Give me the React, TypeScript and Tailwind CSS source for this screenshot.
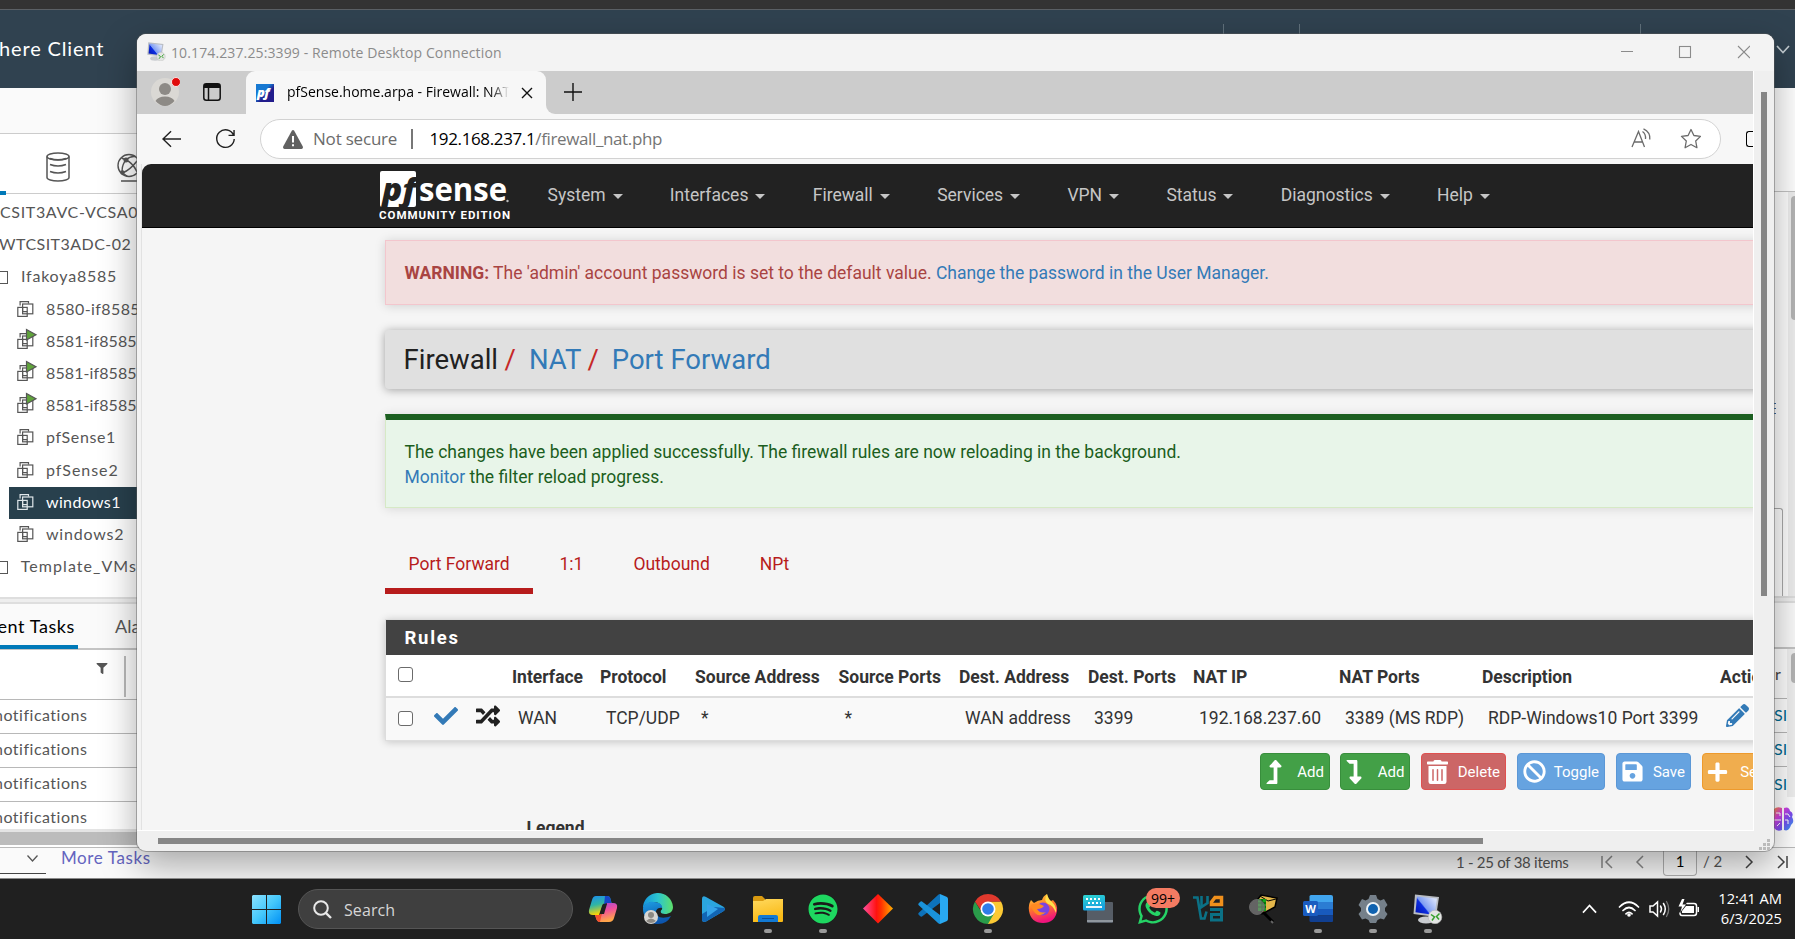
import type { ReactNode } from "react";
import {
  FaBan,
  FaCheck,
  FaFilter,
  FaLevelDownAlt,
  FaLevelUpAlt,
  FaPencilAlt,
  FaPlus,
  FaRandom,
  FaSave,
  FaSpotify,
  FaTrashAlt,
  FaWhatsapp,
} from "react-icons/fa";

/* ---------- vSphere client behind the remote session ---------- */

function VmIcon({ light, running }: { light?: boolean; running?: boolean }) {
  return (
    <svg viewBox="0 0 19 19" className="-mt-[3px] h-[19px] w-[19px] shrink-0 overflow-visible" fill="none" stroke={light ? "#dfe6ea" : "#565656"} strokeWidth="1.2">
      <path d="M3.1 6.5V2.6H11.5V4.4" />
      <rect x="5.6" y="5" width="10.2" height="9.8" />
      <rect x=".8" y="8.4" width="9.4" height="9" />
      <path d="M5.6 8.4V12.6H10.2" />
      {running && <path d="M9.500 -1.500V9L19 3.700Z" fill="#5fa43a" />}
    </svg>
  );
}

function TreeRow({ name, running, selected, spacing = "tracking-[0.35px]" }: { name: string; running?: boolean; selected?: boolean; spacing?: string }) {
  return (
    <div className={`ml-[9px] flex h-[32.2px] items-center pl-[8px] ${spacing} ${selected ? "bg-[#28404d] text-white" : ""}`}>
      <VmIcon light={selected} running={running} />
      <span className="-mt-[2px] ml-[10px] whitespace-nowrap">{name}</span>
    </div>
  );
}

function FolderRow({ name, spacing }: { name: string; spacing: string }) {
  return (
    <div className={`flex h-[32.2px] items-center ${spacing}`}>
      <span className="h-[13px] w-[8px] border border-l-0 border-[#565656]" />
      <span className="-mt-[2px] ml-[13px] whitespace-nowrap">{name}</span>
    </div>
  );
}

function LeftPane() {
  return (
    <div className="flex w-[137px] flex-col overflow-hidden font-[Lato,sans-serif] text-[#565656]">
      <div className="h-[45px] bg-[#fafafa]" />
      <div className="flex h-[61px] justify-between border-y border-[#cccccc] pl-[46px]">
        <svg viewBox="0 0 24 30" className="mt-[18px] h-[30px] w-[24px]" fill="none" stroke="#565656" strokeWidth="1.5">
          <ellipse cx="12" cy="4.5" rx="11" ry="3.5" />
          <path d="M1 4.5V25.5C1 27.500 6 29 12 29S23 27.500 23 25.500V4.500M4 12.500Q12 15.500 20 12.500M4 19.500Q12 22.500 20 19.500M4 6.5Q12 9 20 6.500" />
        </svg>
        <svg viewBox="0 0 20 30" className="mt-[19px] h-[30px] w-[20px]" fill="none" stroke="#565656" strokeWidth="1.400">
          <circle cx="12" cy="12.500" r="11" />
          <path d="M9 7Q16 10 20 19M9 7Q13 3 18 3.500M9 7L4.500 5M9 7Q4 13 5.500 20M5.500 20Q13 17 20 8M5.500 20L10 23M4 28H20" />
          <circle cx="9" cy="7" r="1.800" fill="#565656" />
          <circle cx="5.500" cy="19.500" r="1.500" fill="#565656" />
        </svg>
      </div>
      <div className="-mt-[3px] h-[4px] w-[6px] bg-[#0079b8]" />
      <div className="flex h-[402px] flex-col pt-[2px] text-[16px]">
        <div className="flex h-[32.2px] items-center pb-[2px] tracking-[0.65px] whitespace-nowrap">CSIT3AVC-VCSA0</div>
        <div className="-ml-px flex h-[32.2px] items-center pb-[2px] tracking-[0.450px] whitespace-nowrap">WTCSIT3ADC-02</div>
        <FolderRow name="Ifakoya8585" spacing="tracking-[0.8px]" />
        <TreeRow name="8580-if8585" spacing="tracking-[0.4px]" />
        <TreeRow name="8581-if8585-" spacing="tracking-[0.1px]" running />
        <TreeRow name="8581-if8585-" spacing="tracking-[0.1px]" running />
        <TreeRow name="8581-if8585-" spacing="tracking-[0.1px]" running />
        <TreeRow name="pfSense1" spacing="tracking-[0.6px]" />
        <TreeRow name="pfSense2" spacing="tracking-[0.95px]" />
        <TreeRow name="windows1" selected />
        <TreeRow name="windows2" spacing="tracking-[0.8px]" />
        <FolderRow name="Template_VMs" spacing="tracking-[1.050px]" />
      </div>
      <div className="h-[7px] border-y-2 border-[#dedede] bg-[#eeeeee]" />
      <div className="flex h-[46px] border-b-2 border-[#c4c4c4] bg-[#fafafa] text-[18px]">
        <div className="-mb-px flex w-[78px] items-center justify-end border-b-4 border-[#0079b8] pt-[4px] pr-[3px] tracking-[0.6px] whitespace-nowrap text-black">Recent Tasks</div>
        <div className="ml-[37px] flex items-center">Alarms</div>
      </div>
      <div className="flex h-[50px] border-b border-[#b8b8b8] bg-white pt-[6px]">
        <FaFilter className="mt-[7px] ml-[96px] h-[11px] w-[12px]" />
        <span className="ml-[16px] h-[41px] w-[2px] bg-[#bbbbbb]" />
      </div>
      {[0, 1, 2, 3].map((i) => (
        <div key={i} className={`flex w-[137px] items-center bg-white text-[16px] tracking-[0.5px] ${i < 3 ? "h-[34px] border-b border-[#b8b8b8] pb-[3px]" : "h-[27px] pt-[3px]"}`}>
          <span className="-ml-[6px]">notifications</span>
        </div>
      ))}
      <div className="h-[16px] border-t-3 border-[#e4e4e4] bg-[#bcbcbc]" />
    </div>
  );
}

function RightPane() {
  return (
    <div className="flex w-[21px] flex-col overflow-hidden bg-white font-[Lato,sans-serif]">
      <div className="h-[104px] border-b border-[#c4c4c4]" />
      <div className="flex h-[404px] justify-between">
        <div className="flex w-[9px] flex-col">
          <div className="mt-[211px] flex flex-col gap-[4px]">
            <span className="h-px w-[2px] bg-[#3566a0]" />
            <span className="h-px w-[2px] bg-[#3566a0]" />
            <span className="h-px w-[2px] bg-[#3566a0]" />
          </div>
          <div className="mt-[94px] grow rounded-tr-[3px] border-t border-r border-[#aaaaaa]" />
        </div>
        <div className="flex w-[7px] justify-end bg-[#eeeeee] pt-[4px]">
          <div className="h-[124px] w-[4px] rounded-l-[4px] bg-[#b5b5b5]" />
        </div>
      </div>
      <div className="h-[7px] border-y-2 border-[#dedede] bg-[#eeeeee]" />
      <div className="h-[46px] border-b-2 border-[#c4c4c4] bg-[#fafafa]" />
      <div className="flex h-[148px]">
        <div className="flex w-[13px] flex-col overflow-hidden text-[16px] text-[#006a91]">
          <div className="flex h-[50px] items-center border-b border-[#b8b8b8] pl-px text-[#444444]">r</div>
          <div className="flex h-[34px] items-center border-b border-[#b8b8b8] pb-[2px]">SI</div>
          <div className="flex h-[34px] items-center border-b border-[#b8b8b8] pb-[2px]">SI</div>
          <div className="flex h-[30px] items-center pt-[4px]">SI</div>
        </div>
        <div className="flex grow justify-end bg-[#f0f0f0] pt-[4px]">
          <div className="h-[30px] w-[4px] rounded-l-[4px] bg-[#b5b5b5]" />
        </div>
      </div>
      <div className="flex h-[47px] items-center bg-white">
        <svg viewBox="0 0 21 24" className="-mt-[3px] h-[24px] w-[21px]">
          <defs>
            <linearGradient id="brain" x1="0" y1="0" x2="1" y2="1">
              <stop offset="0" stopColor="#ff8a3c" />
              <stop offset=".3" stopColor="#d63fe0" />
              <stop offset=".6" stopColor="#7a4df0" />
              <stop offset="1" stopColor="#2ba8f5" />
            </linearGradient>
          </defs>
          <path d="M0 2Q3-1 8 1V23Q3 25 0 21ZM10 1Q15-1 16 4Q20 6 18 10Q21 15 17 18Q15 25 10 23Z" fill="url(#brain)" />
          <path d="M2 6H6V9M0 13H7M3 19L6 16M11 7H14L16 10M11 13H14V17" stroke="#fff" fill="none" />
        </svg>
      </div>
    </div>
  );
}

function VSphere() {
  return (
    <div className="flex h-[878px] flex-col">
      <div className="h-[10px] border-b border-[#5b6065] bg-[#333333]" />
      <div className="flex h-[78px] items-start bg-[#304250] font-[Lato,sans-serif] text-[20px] text-white">
        <div className="mt-[25px] -ml-[1px] w-[200px] leading-[26px] tracking-[0.850px]">here Client</div>
        <span className="mt-[14px] ml-[1024px] h-[20px] w-px bg-[#60707b]" />
        <span className="mt-[14px] ml-[75px] h-[20px] w-px bg-[#60707b]" />
        <span className="mt-[14px] ml-[340px] h-[20px] w-px bg-[#60707b]" />
        <svg viewBox="0 0 14 9" className="mt-[35px] ml-[135px] h-[9px] w-[14px]" fill="none" stroke="#c4ccd1" strokeWidth="1.6">
          <path d="M1 1L7 7.500L13 1" />
        </svg>
      </div>
      <div className="flex h-[759px] justify-between bg-white">
        <LeftPane />
        <RightPane />
      </div>
      <div className="flex h-[31px] items-start justify-between border-t border-[#bbbbbb] bg-[#fafafa] font-[Lato,sans-serif] text-[#565656]">
        <div className="flex">
          <div className="flex h-[26px] w-[46px] justify-end border-b border-[#444444]">
            <svg viewBox="0 0 11 7" className="mt-[7px] mr-[8px] h-[7px] w-[11px]" fill="none" stroke="#565656" strokeWidth="1.3">
              <path d="M.5 .5L5.500 6L10.500 .5" />
            </svg>
          </div>
          <span className="ml-[15px] text-[17px] leading-[19px] tracking-[0.600px] text-[#6464c0]">More Tasks</span>
        </div>
        <div className="flex h-[29px] items-center pb-[2px] text-[15px]">
          <span className="w-[145px] leading-[20px] tracking-[-0.270px]">1 - 25 of 38 items</span>
          <svg viewBox="0 0 44 14" className="h-[14px] w-[44px]" fill="none" stroke="#8a8a8a" strokeWidth="1.5">
            <path d="M1 1V13M11 1L5 7L11 13M42 1L36 7L42 13" />
          </svg>
          <span className="mr-[6px] ml-[18px] flex h-[29px] w-[34px] items-center justify-center rounded-b-[4px] border border-t-0 border-[#b0b0b0] text-black">1</span>
          <span className="w-[41px]">/ 2</span>
          <svg viewBox="0 0 44 14" className="mr-[7px] h-[14px] w-[44px]" fill="none" stroke="#444444" strokeWidth="1.5">
            <path d="M2 1L8 7L2 13M34 1L40 7L34 13M43 1V13" />
          </svg>
        </div>
      </div>
    </div>
  );
}

/* ---------- Remote desktop window ---------- */

function RdpIcon({ className, id }: { className: string; id: string }) {
  return (
    <svg viewBox="0 0 30 30" className={className}>
      <defs>
        <linearGradient id={id} x1="0" y1="1" x2="1" y2="0.300">
          <stop offset="0" stopColor="#0012b0" />
          <stop offset=".45" stopColor="#0d2ee0" />
          <stop offset=".5" stopColor="#7d9cf2" />
          <stop offset="1" stopColor="#d5e0fb" />
        </linearGradient>
      </defs>
      <ellipse cx="13" cy="26" rx="8" ry="3.500" fill="#c9ccd0" />
      <path d="M2 0.500L26 3L23 23L.5 20Z" fill="#b9bdc4" />
      <path d="M4 2.500L24 4.600L21.500 21L2.500 18.200Z" fill={`url(#${id})`} />
      <circle cx="22" cy="23" r="6.800" fill="#e3e5e3" stroke="#b5b5b5" strokeWidth=".6" />
      <path d="M18 20.500L21.500 23L19 26.500M26.500 19.500L23.500 22.500L26 25.500" fill="none" stroke="#35a02c" strokeWidth="1.500" />
    </svg>
  );
}

function TitleBar() {
  return (
    <div className="flex h-[37px] items-center bg-[#f3f3f3] pb-[2px] pl-[10px]">
      <RdpIcon id="rdpSmall" className="h-[19px] w-[19px]" />
      <span className="ml-[5px] pt-px text-[14px] tracking-[0.120px] text-[#8b8b8b]">10.174.237.25:3399 - Remote Desktop Connection</span>
      <svg viewBox="0 0 130 14" className="mr-[24px] ml-auto h-[14px] w-[130px]" fill="none" stroke="#8b8b8b" strokeWidth="1.100">
        <path d="M1 6.500H13M118 1L130 13M130 1L118 13" />
        <rect x="59.500" y="1.500" width="11" height="11" />
      </svg>
    </div>
  );
}

function TabStrip() {
  return (
    <div className="flex h-[43px] shrink-0 bg-[#cccccc]">
      <div className="flex w-[109px] items-center rounded-br-[8px]">
        <svg viewBox="0 0 30 30" className="mb-px ml-[13px] h-[30px] w-[30px]">
          <circle cx="15" cy="15" r="14" fill="#dad8d4" />
          <circle cx="15" cy="12" r="6" fill="#8d8a86" />
          <path d="M5.500 24Q8 19.500 15 19.500T24.500 24Q20 29 15 29T5.500 24Z" fill="#8d8a86" />
          <circle cx="26" cy="5" r="4.500" fill="#e00b0b" stroke="#fff" strokeWidth=".8" />
        </svg>
        <svg viewBox="0 0 18 18" className="-mt-px ml-[23px] h-[18px] w-[18px]" fill="none" stroke="#111" strokeWidth="1.500">
          <rect x=".8" y=".8" width="16.400" height="16.400" rx="2.500" />
          <path d="M1 1H17V5H1ZM5 5V17" fill="#111" stroke="none" />
          <path d="M5.500 5V17" />
        </svg>
      </div>
      <div className="flex h-[43px] bg-[#f7f7f7]">
        <div className="-ml-[10px] h-full w-[10px] self-end rounded-br-[9px] bg-[#cccccc]" />
      </div>
      <div className="flex h-[43px] w-[300px] items-center rounded-t-[9px] bg-[#f7f7f7] pb-[2px] pl-[10px]">
        <svg viewBox="0 0 18 18" className="mt-[2px] h-[18px] w-[18px]">
          <defs>
            <linearGradient id="favicon" x1="0" y1="0" x2="1" y2="1">
              <stop offset=".4" stopColor="#1779d2" />
              <stop offset=".6" stopColor="#221c8c" />
            </linearGradient>
          </defs>
          <rect width="18" height="18" fill="url(#favicon)" />
          <text x="1" y="13" fontFamily="Open Sans" fontWeight="800" fontStyle="italic" fontSize="13" letterSpacing="-.6" fill="#fff">pf</text>
        </svg>
        <span className="ml-[13px] w-[222px] overflow-hidden bg-linear-to-r from-black from-90% to-[#f7f7f7] bg-clip-text text-[14px] whitespace-nowrap text-transparent">
          pfSense.home.arpa - Firewall: NAT
        </span>
        <svg viewBox="0 0 12 12" className="mt-[2px] ml-[12px] h-[12px] w-[12px]" stroke="#111" strokeWidth="1.400">
          <path d="M1 1L11 11M11 1L1 11" />
        </svg>
      </div>
      <div className="flex items-center bg-[linear-gradient(#cccccc_50%,#f7f7f7_50%)]">
        <div className="flex h-full w-[60px] items-center rounded-bl-[9px] bg-[#cccccc] pb-[2px] pl-[18px]">
          <svg viewBox="0 0 18 18" className="h-[18px] w-[18px]" stroke="#111" strokeWidth="1.400">
            <path d="M0 9H18M9 0V18" />
          </svg>
        </div>
      </div>
    </div>
  );
}

function AddressBar() {
  return (
    <div className="flex h-[50px] shrink-0 items-center bg-[#f7f7f7]">
      <svg viewBox="0 0 20 18" className="ml-[25px] h-[18px] w-[20px]" fill="none" stroke="#222" strokeWidth="1.500">
        <path d="M20 9H1M9.500 .8L1 9L9.500 17.200" />
      </svg>
      <svg viewBox="0 0 22 22" className="ml-[34px] h-[22px] w-[22px]" fill="none" stroke="#222" strokeWidth="1.500">
        <path d="M19.500 7A9.200 9.200 0 1 0 20.200 11M20 1.500V7.200H14.200" />
      </svg>
      <div className="ml-[24px] flex h-[40px] w-[1461px] shrink-0 items-center rounded-full border border-[#d2d2d2] bg-white pl-[22px] text-[17px]">
        <svg viewBox="0 0 20 19" className="h-[19px] w-[20px]">
          <path d="M8.800 .8Q10-.6 11.200 .8L19.800 16.500Q20.300 18.800 18.500 19H1.500Q-.3 18.800 .2 16.500Z" fill="#616161" />
          <path d="M10 6V12.500M10 14.200V16.200" stroke="#fff" strokeWidth="2" />
        </svg>
        <span className="ml-[10px] w-[98px] tracking-[-0.200px] text-[#6b6b6b]">Not secure</span>
        <span className="h-[20px] w-[1.500px] bg-[#777777]" />
        <span className="ml-[17px] tracking-[-0.370px] text-[#757575]">
          <span className="text-black">192.168.237.1</span>/firewall_nat.php
        </span>
        <svg viewBox="0 0 70 22" className="mr-[19px] ml-auto h-[22px] w-[70px]" fill="none" stroke="#6b6b6b" strokeWidth="1.300">
          <path d="M1 19L7.500 3.500L13.500 19M3.200 14H11.600M11.500 3.500Q15 6 14.500 11M12.500 .8Q19.500 4 18.800 11.500" />
          <path d="M60 1.500L62.900 7.500L69.500 8.400L64.700 13L65.900 19.700L60 16.500L54.100 19.700L55.300 13L50.500 8.400L57.100 7.500Z" strokeLinejoin="round" />
        </svg>
      </div>
      <span className="ml-[25px] h-[16px] w-[7px] shrink-0 rounded-l-[3px] border-[1.500px] border-r-0 border-black" />
    </div>
  );
}

const menus = ["System", "Interfaces", "Firewall", "Services", "VPN", "Status", "Diagnostics", "Help"];

function NavBar() {
  return (
    <div className="flex h-[64px] shrink-0 rounded-tl-[9px] border-b border-black bg-[#222222] pl-[237px] font-[Roboto,sans-serif] text-[17.5px] text-[#c6c6c6]">
      <svg viewBox="0 0 134 56" className="mt-[6px] h-[56px] w-[134px] shrink-0">
        <rect x="1" y="1" width="36" height="36" rx="2" fill="#fff" />
        <text x="3" y="31" fontFamily="Open Sans" fontWeight="800" fontStyle="italic" fontSize="32" textLength="34" lengthAdjust="spacingAndGlyphs" fill="#222222">pf</text>
        <text x="40" y="31" fontFamily="Open Sans" fontWeight="700" fontSize="32" textLength="88" lengthAdjust="spacingAndGlyphs" fill="#fff">sense</text>
        <circle cx="128.500" cy="31" r="1.200" fill="#bbb" />
        <text x="0" y="49" fontFamily="Roboto" fontWeight="700" fontSize="11.500" textLength="131" fill="#fff">COMMUNITY EDITION</text>
      </svg>
      <div className="ml-[34.500px] flex items-center gap-[47.300px] pb-px">
        {menus.map((m) => (
          <span key={m} className="flex items-center gap-[7px]">
            {m}
            <span className="mt-[2px] border-x-5 border-t-5 border-x-transparent border-t-[#c6c6c6]" />
          </span>
        ))}
      </div>
    </div>
  );
}

const columns = ["Interface", "Protocol", "Source Address", "Source Ports", "Dest. Address", "Dest. Ports", "NAT IP", "NAT Ports", "Description", "Actions"];
const rule = ["WAN", "TCP/UDP", "*", "*", "WAN address", "3399", "192.168.237.60", "3389 (MS RDP)", "RDP-Windows10 Port 3399"];
const grid = "grid grid-cols-[126px_88px_95px_143.500px_120.500px_129px_105px_146px_143px_238px_90px] whitespace-nowrap";

function Checkbox() {
  return <span className="h-[15px] w-[15px] rounded-[3px] border border-[#6b6b6b] bg-white" />;
}

function Action({ icon, label, color }: { icon: ReactNode; label: string; color: string }) {
  return (
    <div className={`flex h-[37px] shrink-0 items-center justify-between rounded-[4px] border text-[15px] text-white ${color}`}>
      {icon}
      <span className="pt-px">{label}</span>
    </div>
  );
}

function FirewallPage() {
  return (
    <div className="flex h-[602px] w-[1611px] shrink-0 flex-col overflow-hidden bg-[#f5f5f5] pl-[243px] font-[Roboto,sans-serif] text-[17.5px] text-[#333333]">
      <div className="mt-[12px] flex h-[65px] w-[1400px] shrink-0 items-center border border-[#f3c6cd] bg-[#f2dede] pt-px pl-[18.500px] text-[#a94442] shadow-[0_1px_10px_rgba(0,0,0,0.150)]">
        <span className="whitespace-pre">
          <b>WARNING:</b> The 'admin' account password is set to the default value. <span className="text-[#337ab7]">Change the password in the User Manager.</span>
        </span>
      </div>
      <div className="mt-[25px] flex h-[59px] w-[1400px] shrink-0 items-center rounded-[4px] bg-[#e0e0e0] pt-px pl-[18.500px] text-[27.5px] text-[#212121] shadow-[0_1px_10px_rgba(0,0,0,0.350)]">
        <span>Firewall</span>
        <span className="ml-[6.500px] text-[#c62828]">/</span>
        <span className="ml-[13px] text-[#337ab7]">NAT</span>
        <span className="ml-[6px] text-[#c62828]">/</span>
        <span className="ml-[13px] text-[#337ab7]">Port Forward</span>
      </div>
      <div className="mt-[25px] h-[94px] w-[1400px] shrink-0 border border-t-6 border-[#d6e9c6] border-t-[#1b5e20] bg-[#e8f5e9] pt-[20px] pl-[18.500px] leading-[25px] text-[#1b5e20] shadow-[0_1px_10px_rgba(0,0,0,0.120)]">
        <div>The changes have been applied successfully. The firewall rules are now reloading in the background.</div>
        <div>
          <span className="text-[#337ab7]">Monitor</span> the filter reload progress.
        </div>
      </div>
      <div className="mt-[20px] flex h-[66px] shrink-0 items-stretch text-[#b71c1c]">
        <span className="w-[148px] border-b-6 border-[#b71c1c] pt-[23px] pl-[23.500px]">Port Forward</span>
        <span className="ml-[26.500px] pt-[23px]">1:1</span>
        <span className="ml-[50px] pt-[23px]">Outbound</span>
        <span className="ml-[50px] pt-[23px]">NPt</span>
      </div>
      <div className="mt-[25px] h-[122px] w-[1400px] shrink-0 border border-[#dddddd] shadow-[0_1px_8px_rgba(0,0,0,0.200)]">
        <div className="flex h-[35px] items-center bg-[#424242] pt-[2px] pl-[18.500px] text-[18.500px] font-bold tracking-[1.750px] text-white">Rules</div>
        <div className={`${grid} h-[43px] items-center border-b-2 border-[#dddddd] bg-white pt-[3px] font-bold`}>
          <span className="-mt-[5px] flex pl-[12px]">
            <Checkbox />
          </span>
          {columns.map((c) => (
            <span key={c}>{c}</span>
          ))}
        </div>
        <div className={`${grid} h-[42px] items-center bg-[#f9f9f9] pb-[2px]`}>
          <span className="flex items-center pl-[12px]">
            <Checkbox />
            <FaCheck className="-mt-[5px] ml-[21px] h-[24px] w-[24px] text-[#337ab7]" />
            <FaRandom className="-mt-[5px] ml-[18px] h-[24px] w-[24px] text-[#212121]" />
          </span>
          {rule.map((c, i) => (
            <span key={i} className="pl-[6px]">
              {c}
            </span>
          ))}
          <FaPencilAlt className="-mt-[5px] ml-[6px] h-[23px] w-[23px] text-[#337ab7]" />
        </div>
      </div>
      <div className="mt-[12px] ml-[875px] flex h-[37px] shrink-0">
        <Action label="Add" color="w-[70px] border-[#388e3c] bg-[#43a047] pl-[5px] pr-[5px]" icon={<FaLevelUpAlt className="h-[24px] w-[16px]" />} />
        <Action label="Add" color="ml-[10px] w-[70px] border-[#388e3c] bg-[#43a047] pl-[5px] pr-[4.500px]" icon={<FaLevelDownAlt className="h-[24px] w-[16px]" />} />
        <Action label="Delete" color="ml-[11px] w-[85px] border-[#e0504f] bg-[#cc6666] pl-[5px] pr-[5px]" icon={<FaTrashAlt className="h-[24px] w-[21px]" />} />
        <Action label="Toggle" color="ml-[11px] w-[88px] border-[#5b97d6] bg-[#66a3e0] pl-[5px] pr-[5px]" icon={<FaBan className="h-[23px] w-[23px]" />} />
        <Action label="Save" color="ml-[11px] w-[75px] border-[#5b97d6] bg-[#66a3e0] pl-[5px] pr-[5px]" icon={<FaSave className="h-[23px] w-[21px]" />} />
        <Action label="Separator" color="ml-[11px] w-[109px] border-[#ee9a2c] bg-[#f0ad4e] pl-[4px] pr-[5px]" icon={<FaPlus className="h-[22px] w-[21px]" />} />
      </div>
      <div className="mt-[25px] ml-[141.500px] font-bold">Legend</div>
    </div>
  );
}

function RemoteWindow() {
  return (
    <div className="absolute top-[34px] left-[137px] flex h-[817px] w-[1637px] flex-col overflow-hidden rounded-[9px] bg-[#efefef] font-['Open_Sans','Noto_Sans',sans-serif] shadow-[0_0_0_1px_rgba(90,90,90,0.450),0_14px_36px_rgba(0,0,0,0.340)]">
      <TitleBar />
      <div className="flex h-[760px]">
        <div className="flex w-[1617px] flex-col overflow-hidden border-r border-b border-white bg-[#f5f5f5]">
          <TabStrip />
          <AddressBar />
          <div className="flex h-[666px] shrink-0 border-l-[4px] border-[#f3f3f3]">
            <div className="flex w-[1612px] flex-col border-l border-[#e2e2e2]">
              <NavBar />
              <FirewallPage />
            </div>
          </div>
        </div>
        <div className="ml-[7px] flex pt-[21px]">
          <div className="h-[504px] w-[6px] bg-[#868686]" />
        </div>
      </div>
      <div className="flex h-[20px] items-start justify-between pt-[7px] pl-[21px]">
        <div className="h-[6px] w-[1325px] bg-[#868686]" />
        <svg viewBox="0 0 12 12" className="mr-[3px] h-[12px] w-[12px]" fill="#bbbbbb">
          <path d="M0 9h3v3H0zM4 9h3v3H4zM8 9h3v3H8zM4 5h3v3H4zM8 5h3v3H8zM8 1h3v3H8z" />
        </svg>
      </div>
    </div>
  );
}

/* ---------- Taskbar ---------- */

function TaskIcon({ children, running }: { children: ReactNode; running?: boolean }) {
  return (
    <div className="flex w-[55px] shrink-0 flex-col items-center pt-[15px]">
      <div className="flex h-[30px] w-[30px] items-center justify-center">{children}</div>
      {running && <span className="mt-[5px] h-[4px] w-[8px] rounded-full bg-[#9a9a9a]" />}
    </div>
  );
}

function Art({ children }: { children: ReactNode }) {
  return (
    <svg viewBox="0 0 30 30" className="h-[30px] w-[30px] overflow-visible">
      {children}
    </svg>
  );
}

function Gradient({ id, from, to, mid, h }: { id: string; from: string; to: string; mid?: string; h?: boolean }) {
  return (
    <linearGradient id={id} x1="0" y1="0" x2={h ? "1" : ".3"} y2={h ? "0" : "1"}>
      <stop offset="0" stopColor={from} />
      {mid && <stop offset=".5" stopColor={mid} />}
      <stop offset="1" stopColor={to} />
    </linearGradient>
  );
}

function Taskbar() {
  return (
    <div className="flex h-[61px] border-t border-[#8a8a8a] bg-[#202020] font-['Open_Sans','Noto_Sans',sans-serif]">
      <svg viewBox="0 0 29 29" className="mt-[16px] ml-[252px] h-[29px] w-[29px]">
        <defs>
          <linearGradient id="win" gradientUnits="userSpaceOnUse" x1="0" y1="0" x2="29" y2="29">
            <stop offset="0" stopColor="#8ce2ff" />
            <stop offset=".5" stopColor="#45c8fb" />
            <stop offset="1" stopColor="#0090f5" />
          </linearGradient>
        </defs>
        <path d="M1 0H14V14H0V1ZM15 0H28L29 1V14H15ZM0 15H14V29H1L0 28ZM15 15H29V28L28 29H15Z" fill="url(#win)" />
      </svg>
      <div className="mt-[10px] ml-[17px] flex h-[40px] w-[275px] items-center rounded-full border border-[#555555] bg-[#3f3f3f] pl-[14px] text-[16px] text-[#d6d6d6]">
        <svg viewBox="0 0 19 19" className="h-[19px] w-[19px]" fill="none" stroke="#e8e8e8" strokeWidth="2">
          <circle cx="8" cy="8" r="6.800" />
          <path d="M12.800 12.800L18 18" strokeWidth="2.400" />
        </svg>
        <span className="ml-[12px] pt-px tracking-[0.100px]">Search</span>
      </div>
      <div className="ml-[2.500px] flex">
        <TaskIcon>
          <Art>
            <defs>
              <Gradient id="co1" from="#1c8cf0" mid="#2fb5a5" to="#ffd500" />
              <Gradient id="co2" from="#9a4be0" mid="#f0509a" to="#ffa54a" />
            </defs>
            <path d="M8 2H19Q22 2 22.500 5L23.500 9H18Q15 9 14 12L11 21H5Q0 21 1 16L4 6Q5 2 8 2Z" fill="url(#co1)" />
            <path d="M17 2H19Q22 2 22.500 5L23.500 9H18L16 11Z" fill="#1546c8" />
            <path d="M19 9H25Q30 9 29 14L26 24Q25 28 21 28H12Q9 28 8 24L7 21H11Q14 21 15 18Z" fill="url(#co2)" />
            <path d="M7 21H11L14 19L12 28Q9 28 8 24Z" fill="#f4502e" />
            <path d="M15 10H19L16 20H12Z" fill="#202020" />
          </Art>
        </TaskIcon>
        <TaskIcon>
          <Art>
            <defs>
              <Gradient id="ed1" from="#1595dc" mid="#2cc5cf" to="#5ee06a" h />
              <Gradient id="ed2" from="#1d9de2" to="#0c55ae" />
            </defs>
            <path d="M0 15A15 15 0 0 1 30 13C30 18 26 20 22 20C17 20 17 17 19 15.500C20 13 17 8 11 8C5 8 1 11 0 15Z" fill="url(#ed1)" />
            <path d="M0 14C2 9 7 7 11 8C17 8 20 12 19 14C15 13 11 17 14 21C17 25 23 24 28 22Q24 30 15 30A15 15 0 0 1 0 14Z" fill="url(#ed2)" />
            <circle cx="8" cy="23" r="7" fill="#d8d6d3" />
            <circle cx="8" cy="21" r="3" fill="#8c8984" />
            <path d="M3 27Q8 22 13 27Q8 31 3 27Z" fill="#8c8984" />
          </Art>
        </TaskIcon>
        <TaskIcon>
          <Art>
            <path d="M4 5Q4 1 8 3L25 12.500Q29 15 25 17.500L8 27.500Q4 29 4 25Z" fill="#2ba6df" />
            <path d="M4 25V20L16 13L27 14Q27.500 16 25 17.500L8 27.500Q4 29 4 25Z" fill="#1265b4" />
            <path d="M9 10L20 15L9 23Z" fill="#35a4ea" />
          </Art>
        </TaskIcon>
        <TaskIcon running>
          <Art>
            <defs>
              <Gradient id="fo" from="#ffd95e" to="#f9b915" />
            </defs>
            <path d="M0 4Q0 2 2 2H9L12 5V9H0Z" fill="#d99a10" />
            <path d="M0 7H10L13 5H30V27Q30 28 29 28H0Z" fill="url(#fo)" />
            <path d="M5 28V23Q5 21 7 21H23Q25 21 25 23V28Z" fill="#1279d3" />
            <path d="M9 24.500H21" stroke="#0b4f98" />
          </Art>
        </TaskIcon>
        <TaskIcon running>
          <span className="flex rounded-full bg-[#1a1a1a]">
            <FaSpotify className="h-[30px] w-[30px] text-[#1ed760]" />
          </span>
        </TaskIcon>
        <TaskIcon>
          <Art>
            <defs>
              <linearGradient id="di">
                <stop offset="0" stopColor="#ff4fa0" />
                <stop offset=".45" stopColor="#ff1210" />
                <stop offset=".6" stopColor="#ff3000" />
                <stop offset="1" stopColor="#ffae00" />
              </linearGradient>
            </defs>
            <path d="M15 0L30 14.500L15 29.500L0 14.500Z" fill="url(#di)" />
          </Art>
        </TaskIcon>
        <TaskIcon>
          <Art>
            <path d="M22 0L29 3Q30 4 30 5V25Q30 26 29 27L22 30Z" fill="#29a9f2" />
            <path d="M22 0V9L4 22.500Q3 23 2 22L.5 20.500Q0 20 .5 19L20 1Q21 0 22 0Z" fill="#0d72ba" />
            <path d="M22 30V21L4 7.500Q3 7 2 8L.5 9.500Q0 10 .5 11L20 29Q21 30 22 30Z" fill="#1a93db" />
          </Art>
        </TaskIcon>
        <TaskIcon running>
          <Art>
            <path d="M28 7.500A15 15 0 0 1 15 30L15 15L15 7.500Z" fill="#fcc934" />
            <path d="M15 30A15 15 0 0 1 2 7.500L9 19L21.500 18.800Z" fill="#2a9c4a" />
            <path d="M2 7.500A15 15 0 0 1 28 7.500L15 7.800L9 18Z" fill="#e0392d" />
            <circle cx="15" cy="15" r="7.500" fill="#fff" />
            <circle cx="15" cy="15" r="5.800" fill="#2f7de9" />
          </Art>
        </TaskIcon>
        <TaskIcon>
          <Art>
            <defs>
              <Gradient id="ff" from="#ffdc3c" mid="#ff7a28" to="#f0147d" />
            </defs>
            <path d="M3 6L6 9Q10 6 14 6Q15 2 19 0Q20 5 23 7L25 6Q30 11 29 17Q27 29 15 29T1 17Q0 11 3 6Z" fill="url(#ff)" />
            <path d="M19 0Q20 5 24 8Q29 13 28 19Q25 11 20 10Q15 7 19 0Z" fill="#ffe04a" />
            <circle cx="15" cy="15" r="6.500" fill="#7a45e0" />
            <path d="M3 11Q9 8 16 12Q14 15 9 15Q12 20 18 18Q12 24 7 19Q4 16 3 11Z" fill="#ff8a22" />
          </Art>
        </TaskIcon>
        <TaskIcon>
          <Art>
            <defs>
              <Gradient id="kb" from="#2fd6d0" to="#159fe0" />
            </defs>
            <rect x="4" y="8" width="26" height="21" rx="1" fill="#565d66" />
            <path d="M4 27H30" stroke="#a5abb2" strokeWidth="1.500" />
            <rect width="22" height="15.500" y="1" rx="1.500" fill="url(#kb)" />
            <path d="M3 5H19M5 9H18" stroke="#fff" strokeWidth="2" strokeDasharray="2 2" />
            <path d="M3 13H19" stroke="#fff" strokeWidth="1.800" />
          </Art>
        </TaskIcon>
        <TaskIcon>
          <div className="relative">
            <FaWhatsapp className="h-[34px] w-[34px] text-[#25d366]" />
            <span className="absolute -top-[4px] left-[10px] flex h-[20px] w-[34px] items-center justify-center rounded-full bg-[#f47b62] text-[14px] text-black">99+</span>
          </div>
        </TaskIcon>
        <TaskIcon>
          <Art>
            <path d="M0 3.500H4.500L8 24.500H11.500L13.500 17.500M8.500 2V13L14.500 9V2" fill="none" stroke="#0b7186" strokeWidth="2.600" />
            <path d="M18.500 10.500V8L22 3.500H28.500V10.500Z" fill="none" stroke="#f0901c" strokeWidth="3.500" />
            <path d="M17 15.500H28.500V26H18.500V20.500H28" fill="none" stroke="#0b7186" strokeWidth="3" />
          </Art>
        </TaskIcon>
        <TaskIcon>
          <Art>
            <path d="M10 5L13 1L29 4L27 13L14 20Z" fill="#e3b64a" stroke="#000" strokeWidth="1.500" />
            <path d="M12 2L20 7L28 5" fill="none" stroke="#000" />
            <path d="M10 5H18V17H10Z" fill="#12a61c" />
            <path d="M10 9H18M10 13H18M14 5V17" stroke="#033d05" />
            <circle cx="9" cy="13" r="7.500" fill="#888" fillOpacity=".65" stroke="#666" />
            <path d="M15 18L25 28" stroke="#000" strokeWidth="3" />
            <path d="M23 27L25 29" stroke="#666" strokeWidth="2" />
          </Art>
        </TaskIcon>
        <TaskIcon running>
          <Art>
            <path d="M8 1H28Q30 1 30 3V8H6.500V2.500Q6.500 1 8 1Z" fill="#41a5ee" />
            <path d="M6.500 8H30V15H6.500Z" fill="#2b7cd3" />
            <path d="M6.500 15H30V21.500H6.500Z" fill="#185abd" />
            <path d="M6.500 21.500H30V27Q30 28 29 28H8Q6.500 28 6.500 27Z" fill="#103f91" />
            <rect y="7" width="15" height="15" rx="1.500" fill="#1a5cc0" />
            <text x="7.500" y="18.500" textAnchor="middle" fontFamily="Open Sans" fontWeight="700" fontSize="11" fill="#fff">W</text>
          </Art>
        </TaskIcon>
        <TaskIcon running>
          <Art>
            <path d="M12 1H18L19.500 5L22.500 6.500L26 5L29.500 11L27 14V17L29.500 20L26 25.500L22.500 24.500L19.500 26L18 29H12L10.500 26L7.500 24.500L4 25.500L.5 20L3 17V14L.5 11L4 5L7.500 6.500L10.500 5Z" fill="#75808a" />
            <circle cx="15" cy="15" r="7" fill="#eef4f8" />
            <circle cx="15" cy="15" r="5" fill="#0f62b0" />
          </Art>
        </TaskIcon>
        <TaskIcon running>
          <RdpIcon id="rdpLarge" className="h-[30px] w-[30px]" />
        </TaskIcon>
      </div>
      <div className="mr-[13px] ml-auto flex">
        <svg viewBox="0 0 120 24" className="mt-[18px] mr-[15px] h-[24px] w-[120px]" fill="none" stroke="#ffffff" strokeWidth="1.700" strokeLinecap="round">
          <path d="M2.500 15L8.500 8.500L14.500 15" strokeLinecap="square" />
          <path d="M38.500 10Q48 .5 57.500 10M42 13.500Q48 7.500 54 13.500M45 16.800Q48 14 51 16.800" />
          <circle cx="48" cy="18" r="1.800" fill="#fff" stroke="none" />
          <path d="M69 9H72L76.500 5V19L72 15H69ZM79.500 9Q81.500 12 79.500 15M82.500 6.500Q86 12 82.500 17.500" strokeWidth="1.500" />
          <path d="M85.500 4.500Q90 12 85.500 19.500" stroke="#777" strokeWidth="1.300" />
          <path d="M106 6.500H113Q115.500 6.500 115.500 9V16Q115.500 18.500 113 18.500H101Q99 18.500 99 16" strokeWidth="1.500" />
          <path d="M105 9H113V16H101V14ZM116.500 10V15H118V10Z" fill="#fff" stroke="none" />
          <path d="M101 2L97.500 9.500H101L99.500 15L105 7.500H101.500L103.500 2Z" fill="#fff" stroke="none" />
        </svg>
        <div className="flex w-[66px] flex-col items-end pt-[9px] text-[14.700px] leading-[20px] whitespace-nowrap text-white">
          <span>12:41 AM</span>
          <span>6/3/2025</span>
        </div>
      </div>
    </div>
  );
}

export default function App() {
  return (
    <div className="relative h-[939px] w-[1795px] overflow-hidden">
      <VSphere />
      <RemoteWindow />
      <div className="relative">
        <Taskbar />
      </div>
    </div>
  );
}
